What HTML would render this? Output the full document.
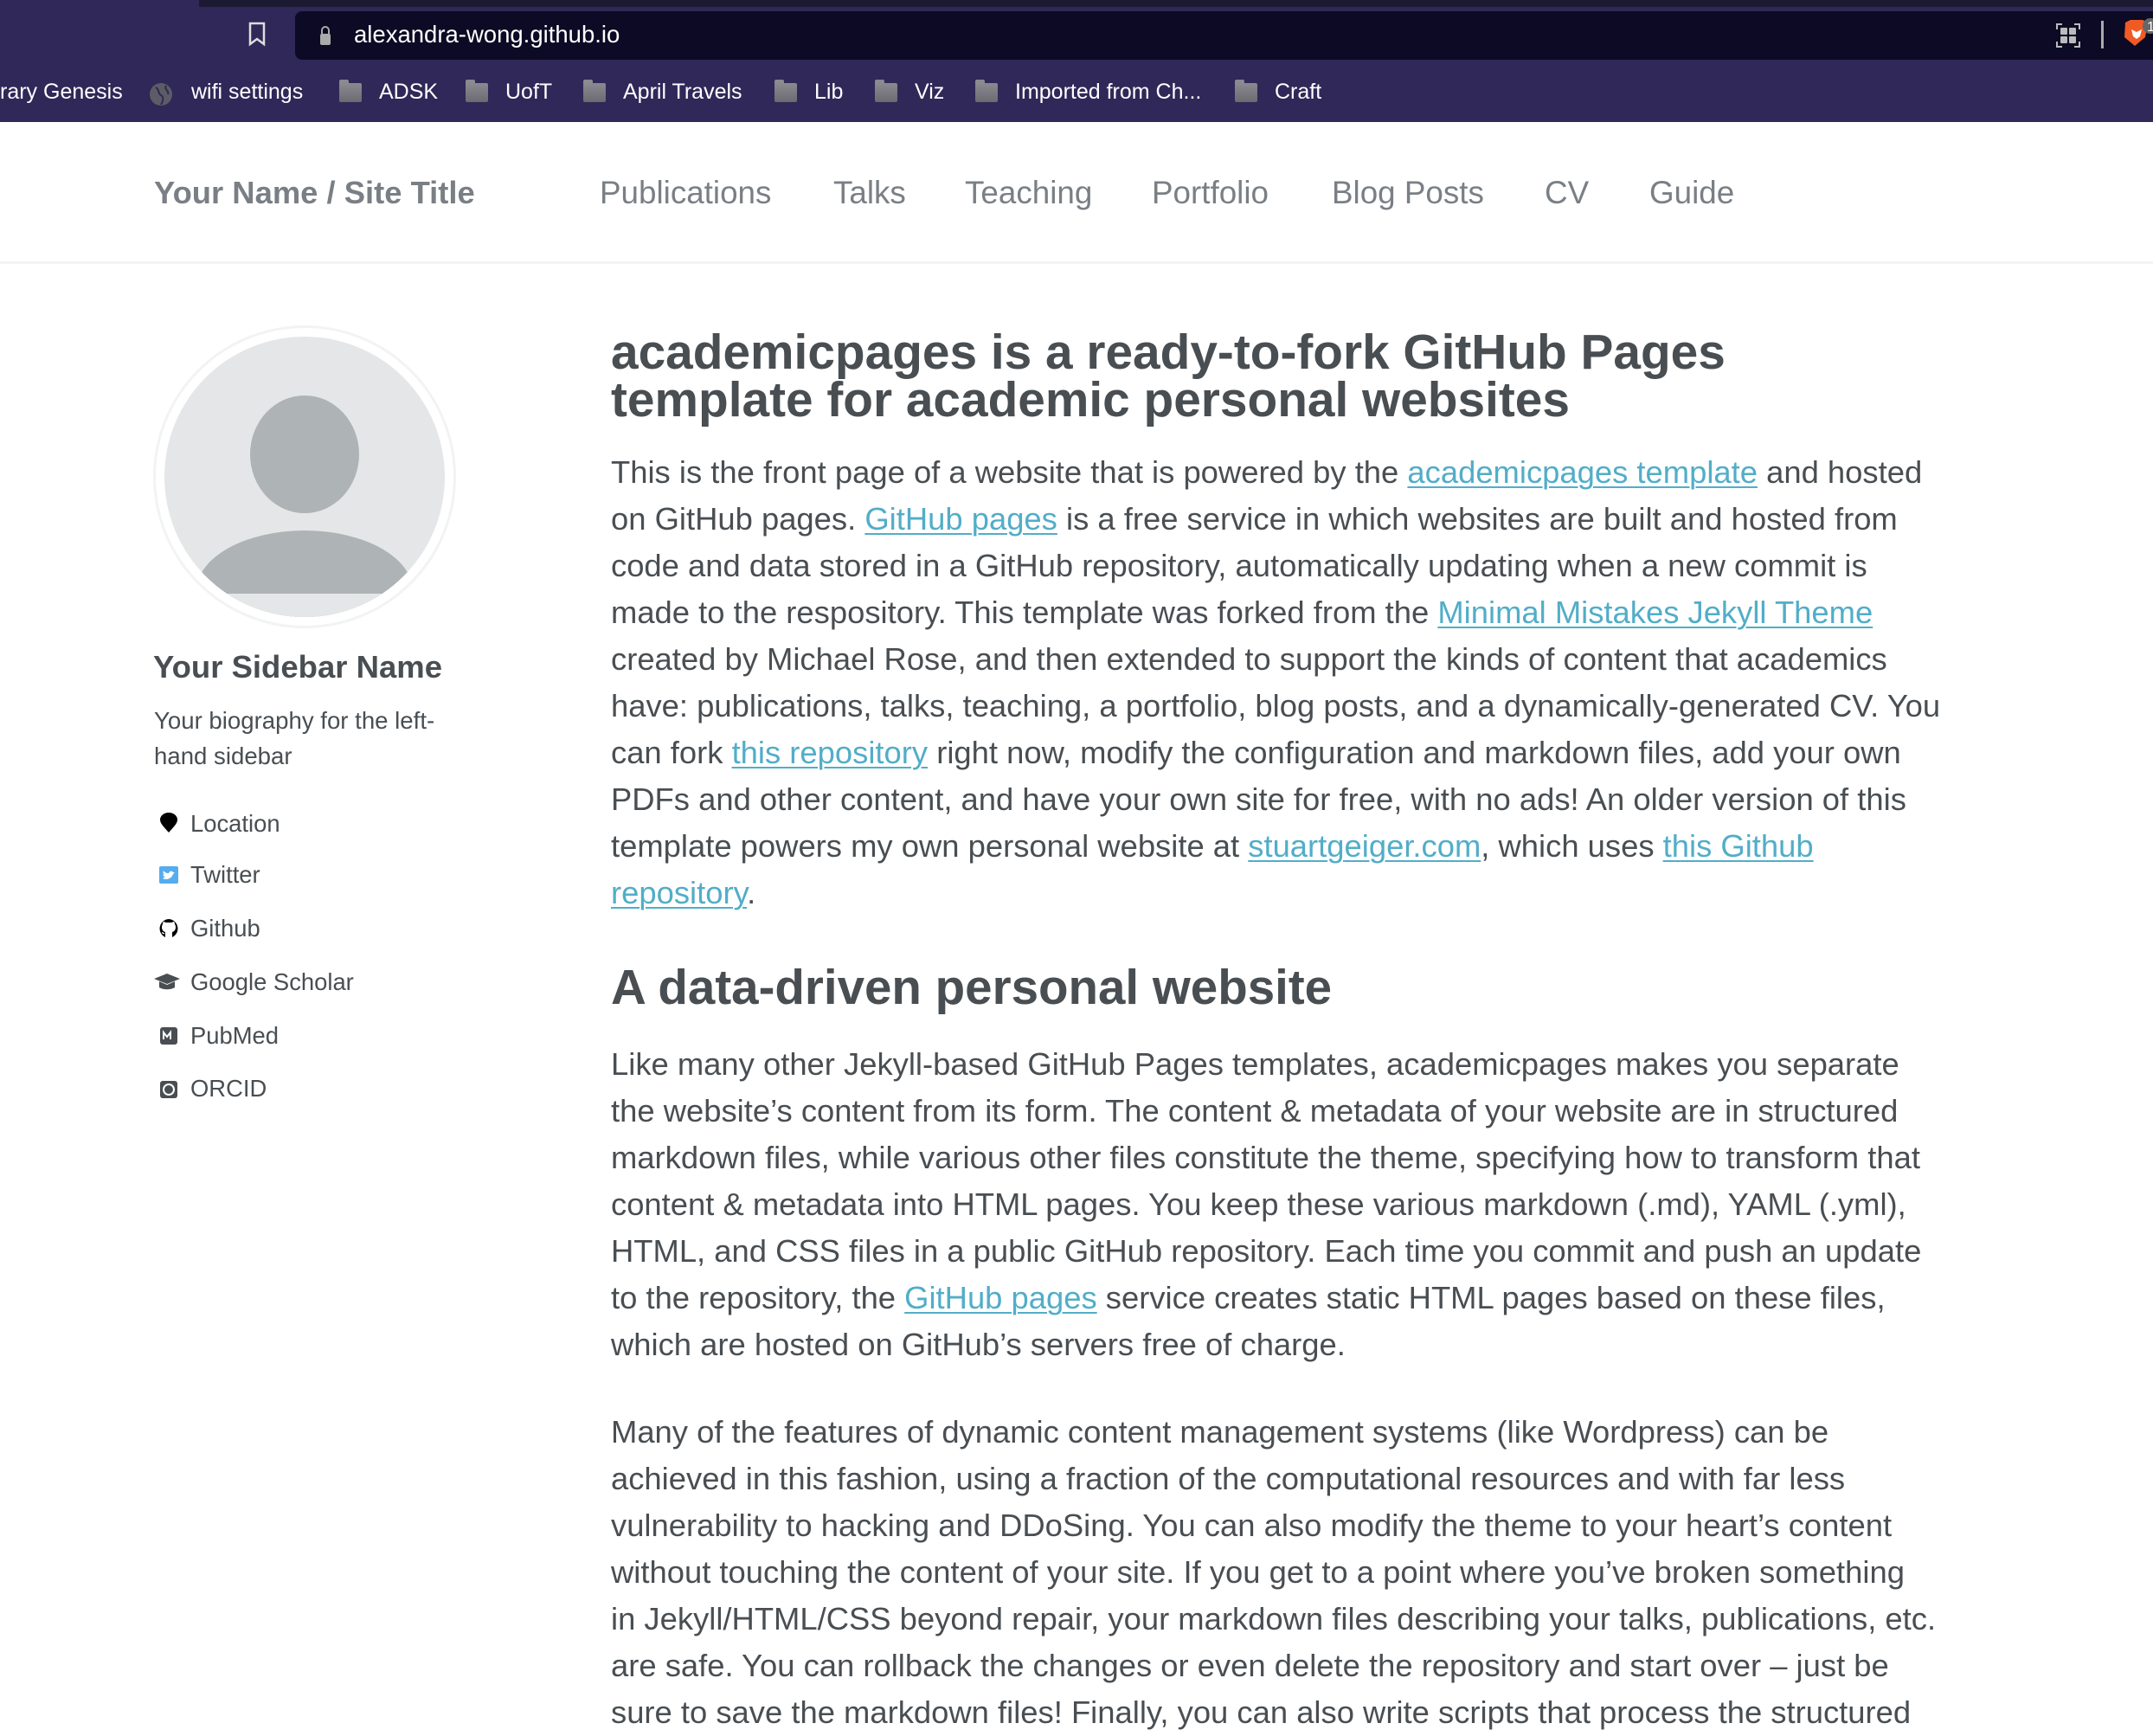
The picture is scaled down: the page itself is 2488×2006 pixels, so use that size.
<!DOCTYPE html>
<html><head><meta charset="utf-8"><style>
*{margin:0;padding:0;box-sizing:border-box}
body{width:2488px;height:2002px;overflow:hidden;background:#fff;font-family:"Liberation Sans",Arial,sans-serif;color:#494e52;position:relative}
.a{position:absolute;white-space:nowrap}
.bm{position:absolute;top:88px;font-size:25px;color:#fff;line-height:36px}
.fold{position:absolute;top:96px;width:26px;height:22px;background:linear-gradient(#8a8a90,#6a6a70);border-radius:2px}
.fold:before{content:"";position:absolute;top:-4px;left:0;width:11px;height:5px;background:#8a8a90;border-radius:2px 2px 0 0}
.nav{position:absolute;top:199px;font-size:36.8px;color:#7a7f85;line-height:48px}
.p{position:absolute;left:706px;font-size:36.4px;line-height:54px;white-space:nowrap;color:#494e52}
a{color:#52adc8;text-decoration:underline;text-decoration-thickness:2px;text-underline-offset:4px}
.h{position:absolute;left:706px;font-size:56.8px;font-weight:bold;line-height:56px;white-space:nowrap;color:#494e52}
.sl{position:absolute;left:220px;font-size:27.4px;line-height:36px;color:#494e52}
.ic{position:absolute;left:182px;width:26px;height:26px}
</style></head><body>
<div class="a" style="left:0;top:0;width:2488px;height:141px;background:#2f2858"></div>
<div class="a" style="left:230px;top:0;width:2258px;height:8px;background:#1c1a33"></div>
<div class="a" style="left:341px;top:13px;width:2147px;height:56px;background:#0c0a24;border-radius:8px 0 0 8px"></div>
<svg class="a" style="left:286px;top:25px" width="22" height="30" viewBox="0 0 22 30"><path d="M3 2h16v24l-8-6-8 6z" fill="none" stroke="#ddd" stroke-width="2.5"/></svg>
<svg class="a" style="left:368px;top:28px" width="16" height="26" viewBox="0 0 16 26"><path d="M4 11V7a4 4 0 018 0v4" fill="none" stroke="#aaa" stroke-width="2"/><rect x="2" y="11" width="12" height="13" rx="2" fill="#aaa"/></svg>
<div class="a" style="left:409px;top:22px;font-size:27.5px;color:#fff;line-height:36px">alexandra-wong.github.io</div>
<svg class="a" style="left:2375px;top:26px" width="30" height="30" viewBox="0 0 30 30"><g fill="#bbb"><rect x="6" y="6" width="8" height="8" rx="1"/><rect x="16" y="6" width="8" height="8" rx="1"/><rect x="6" y="16" width="8" height="8" rx="1"/><rect x="16" y="16" width="8" height="8" rx="1"/></g><path d="M2 8V2h6M22 2h6v6M28 22v6h-6M8 28H2v-6" fill="none" stroke="#bbb" stroke-width="2"/></svg>
<div class="a" style="left:2428px;top:24px;width:3px;height:32px;background:#aaa"></div>
<svg class="a" style="left:2452px;top:20px" width="36" height="40" viewBox="0 0 36 40"><path d="M4 6l6-3h14l6 3-3 17-12 10-12-10z" fill="#f05a24"/><path d="M11 14l6 3 6-3-2 8-4 3-4-3z" fill="#fff"/><circle cx="33" cy="10" r="9" fill="#666"/><text x="29" y="16" font-size="16" fill="#fff" font-family="Liberation Sans">1</text></svg>
<div class="bm" style="left:0">rary Genesis</div>
<svg class="a" style="left:172px;top:95px" width="28" height="28" viewBox="0 0 28 28"><circle cx="14" cy="14" r="13" fill="#5c5c66"/><path d="M8 6c5 3 2 7 6 9s2 8 0 11M20 4c-3 4 4 6 2 10" fill="none" stroke="#2f2858" stroke-width="2"/></svg>
<div class="bm" style="left:221px">wifi settings</div>
<div class="fold" style="left:392px"></div><div class="bm" style="left:438px">ADSK</div>
<div class="fold" style="left:538px"></div><div class="bm" style="left:584px">UofT</div>
<div class="fold" style="left:674px"></div><div class="bm" style="left:720px">April Travels</div>
<div class="fold" style="left:895px"></div><div class="bm" style="left:941px">Lib</div>
<div class="fold" style="left:1011px"></div><div class="bm" style="left:1057px">Viz</div>
<div class="fold" style="left:1127px"></div><div class="bm" style="left:1173px">Imported from Ch...</div>
<div class="fold" style="left:1427px"></div><div class="bm" style="left:1473px">Craft</div>

<div class="nav" style="left:178px;font-weight:bold;font-size:36.4px">Your Name / Site Title</div>
<div class="nav" style="left:693px">Publications</div>
<div class="nav" style="left:963px">Talks</div>
<div class="nav" style="left:1115px">Teaching</div>
<div class="nav" style="left:1331px">Portfolio</div>
<div class="nav" style="left:1539px">Blog Posts</div>
<div class="nav" style="left:1785px">CV</div>
<div class="nav" style="left:1906px">Guide</div>
<div class="a" style="left:0;top:302px;width:2488px;height:3px;background:#f2f3f3"></div>

<div class="a" style="left:177px;top:376px;width:350px;height:350px;border-radius:50%;border:3px solid #f2f3f3"></div>
<div class="a" style="left:190px;top:389px;width:324px;height:324px;border-radius:50%;background:#e5e6e7;overflow:hidden">
 <div class="a" style="left:99px;top:68px;width:126px;height:136px;border-radius:50%;background:#aeb3b5"></div>
 <div class="a" style="left:37px;top:224px;width:250px;height:160px;border-radius:50% 50% 0 0/70px 70px 0 0;background:#aeb3b5"></div>
 <div class="a" style="left:0;top:297px;width:324px;height:40px;background:#e5e6e7"></div>
</div>
<div class="a" style="left:177px;top:749px;font-size:36.5px;font-weight:bold;line-height:44px;color:#494e52">Your Sidebar Name</div>
<div class="a" style="left:178px;top:812px;font-size:27.6px;line-height:41px;color:#494e52">Your biography for the left-<br>hand sidebar</div>
<svg class="ic" style="top:938px" viewBox="0 0 26 26"><path d="M13 24C8 18 3 14 3 9a10 8 0 0120 0c0 5-5 9-10 15z" fill="#000"/></svg>
<div class="sl" style="top:934px">Location</div>
<svg class="ic" style="top:998px" viewBox="0 0 26 26"><rect x="2" y="3" width="22" height="20" rx="2" fill="#55acee"/><path d="M6 17c4 2 10 1 12-5l2-2-2 0c-1-2-4-2-5 1-3 0-5-1-6-3-1 2 0 4 1 5-1 0-2 0-2-1 0 2 2 3 3 3-1 1-2 1-3 2z" fill="#fff"/></svg>
<div class="sl" style="top:993px">Twitter</div>
<svg class="ic" style="top:1060px" viewBox="0 0 26 26"><path d="M13 2a11 11 0 00-4 21v-4c-3 1-4-1-4-2 2 0 3 2 4 2v-2c-3-1-4-3-4-6 0-2 1-3 1-3s0-2 1-3c1 0 2 1 3 1h6c1 0 2-1 3-1 1 1 1 3 1 3s1 1 1 3c0 3-1 5-4 6v6A11 11 0 0013 2z" fill="#000"/></svg>
<div class="sl" style="top:1055px">Github</div>
<svg class="ic" style="top:1122px;left:177px;width:32px" viewBox="0 0 32 26"><path d="M1 9l15-6 15 6-15 6z" fill="#494e52"/><path d="M7 12v7c5 3 13 3 18 0v-7l-9 4z" fill="#494e52"/></svg>
<div class="sl" style="top:1117px">Google Scholar</div>
<svg class="ic" style="top:1184px" viewBox="0 0 26 26"><rect x="3" y="3" width="20" height="20" rx="3" fill="#494e52"/><path d="M7 17V9l4 5 4-5v8" fill="none" stroke="#fff" stroke-width="2"/></svg>
<div class="sl" style="top:1179px">PubMed</div>
<svg class="ic" style="top:1246px" viewBox="0 0 26 26"><rect x="3" y="3" width="20" height="20" rx="3" fill="#494e52"/><circle cx="13" cy="13" r="6" fill="none" stroke="#fff" stroke-width="2"/></svg>
<div class="sl" style="top:1240px">ORCID</div>

<div class="h" style="top:380px">academicpages is a ready-to-fork GitHub Pages</div>
<div class="h" style="top:435px">template for academic personal websites</div>

<div class="p" style="top:519px">This is the front page of a website that is powered by the <a>academicpages template</a> and hosted</div>
<div class="p" style="top:573px">on GitHub pages. <a>GitHub pages</a> is a free service in which websites are built and hosted from</div>
<div class="p" style="top:627px">code and data stored in a GitHub repository, automatically updating when a new commit is</div>
<div class="p" style="top:681px">made to the respository. This template was forked from the <a>Minimal Mistakes Jekyll Theme</a></div>
<div class="p" style="top:735px">created by Michael Rose, and then extended to support the kinds of content that academics</div>
<div class="p" style="top:789px">have: publications, talks, teaching, a portfolio, blog posts, and a dynamically-generated CV. You</div>
<div class="p" style="top:843px">can fork <a>this repository</a> right now, modify the configuration and markdown files, add your own</div>
<div class="p" style="top:897px">PDFs and other content, and have your own site for free, with no ads! An older version of this</div>
<div class="p" style="top:951px">template powers my own personal website at <a>stuartgeiger.com</a>, which uses <a>this Github</a></div>
<div class="p" style="top:1005px"><a>repository</a>.</div>

<div class="h" style="top:1113px;font-size:56.5px">A data-driven personal website</div>

<div class="p" style="top:1203px">Like many other Jekyll-based GitHub Pages templates, academicpages makes you separate</div>
<div class="p" style="top:1257px">the website’s content from its form. The content &amp; metadata of your website are in structured</div>
<div class="p" style="top:1311px">markdown files, while various other files constitute the theme, specifying how to transform that</div>
<div class="p" style="top:1365px">content &amp; metadata into HTML pages. You keep these various markdown (.md), YAML (.yml),</div>
<div class="p" style="top:1419px">HTML, and CSS files in a public GitHub repository. Each time you commit and push an update</div>
<div class="p" style="top:1473px">to the repository, the <a>GitHub pages</a> service creates static HTML pages based on these files,</div>
<div class="p" style="top:1527px">which are hosted on GitHub’s servers free of charge.</div>

<div class="p" style="top:1628px">Many of the features of dynamic content management systems (like Wordpress) can be</div>
<div class="p" style="top:1682px">achieved in this fashion, using a fraction of the computational resources and with far less</div>
<div class="p" style="top:1736px">vulnerability to hacking and DDoSing. You can also modify the theme to your heart’s content</div>
<div class="p" style="top:1790px">without touching the content of your site. If you get to a point where you’ve broken something</div>
<div class="p" style="top:1844px">in Jekyll/HTML/CSS beyond repair, your markdown files describing your talks, publications, etc.</div>
<div class="p" style="top:1898px">are safe. You can rollback the changes or even delete the repository and start over – just be</div>
<div class="p" style="top:1952px">sure to save the markdown files! Finally, you can also write scripts that process the structured</div>
</body></html>
